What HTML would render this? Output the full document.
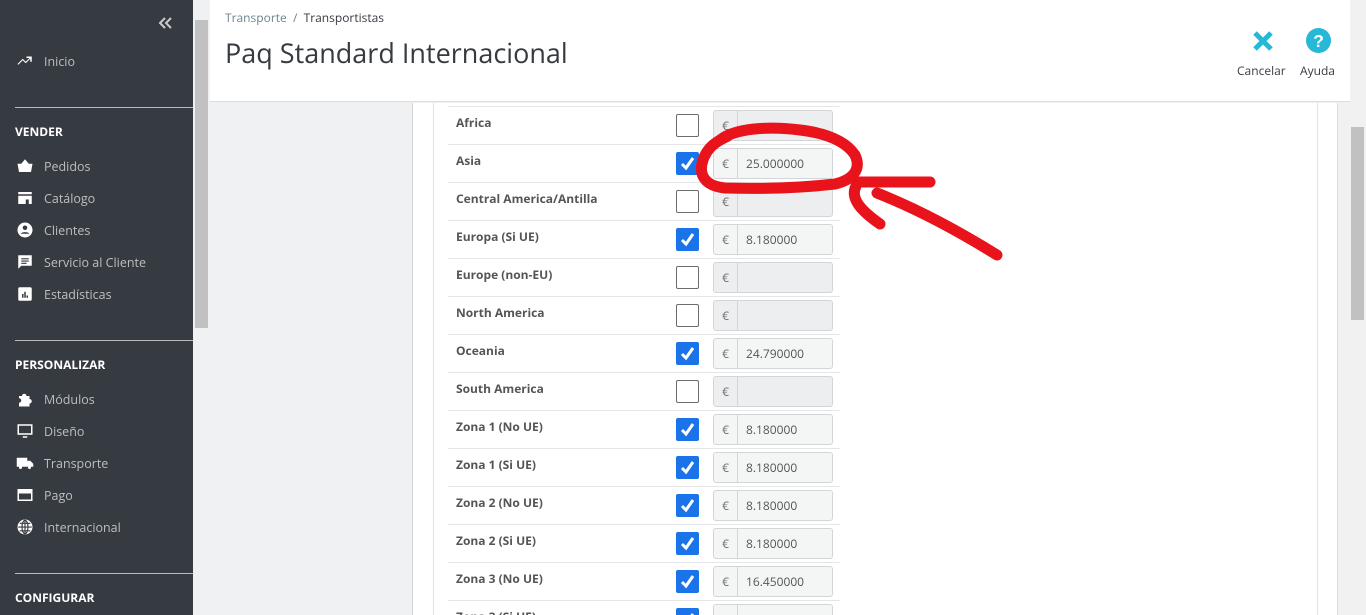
<!DOCTYPE html>
<html><head><meta charset="utf-8"><style>
*{margin:0;padding:0;box-sizing:border-box}
html,body{width:1366px;height:615px;overflow:hidden}
body{background:#eff1f2;font-family:"Open Sans","Liberation Sans",sans-serif;position:relative}
.sb{position:absolute;left:0;top:0;width:193px;height:615px;background:#363a41;color:#bebebe;font-size:12.5px}
.sb .it{position:absolute;left:16px;height:20px;display:flex;align-items:center}
.sb .it svg{width:18px;height:18px;margin-right:10px;fill:#fff}
.sb .h{position:absolute;left:15px;color:#fff;font-weight:bold;font-size:12px}
.sb .ln{position:absolute;left:15px;width:178px;height:1px;background:#bbb}
.scr1{position:absolute;left:193px;top:0;width:17px;height:615px;background:#eff1f2}
.hdr{position:absolute;left:210px;top:0;width:1140px;height:102px;background:#fff;border-bottom:1px solid #dcdcdc}
.card{position:absolute;left:412px;top:103px;width:926px;height:520px;background:#fff;border-left:1px solid #d4d4d4;border-right:1px solid #dcdcdc}
.inner{position:absolute;left:433px;top:103px;width:885px;height:520px;border-left:1px solid #e2e2e2;border-right:1px solid #e2e2e2}
.row{position:absolute;left:448px;width:392px;height:38px;border-top:1px solid #e6e6e6}
.row .l{position:absolute;left:8px;top:7px;font-weight:bold;font-size:12px;color:#555}
.cb{position:absolute;left:228px;top:7px;width:23px;height:23px;border:1px solid #6c6c6c;border-radius:2px;background:#fff}
.cb.on{background:#1a73e8;border-color:#1a73e8}
.cb svg{position:absolute;left:2px;top:2px}
.inp{position:absolute;left:265px;top:3px;width:120px;height:31px;border:1px solid #d2d6d8;border-radius:3px;background:#eceeef;font-size:12px;color:#6c6c6c}
.inp .e{position:absolute;left:0;top:0;width:24px;height:29px;border-right:1px solid #d2d6d8;text-align:center;line-height:29px}
.inp .v{position:absolute;left:32px;top:0;line-height:29px;color:#555}
.inp.on{background:#f4f6f6}
</style></head><body>
<div class="sb">
<svg style="position:absolute;left:158px;top:17px" width="14" height="12" viewBox="0 0 14 12"><path d="M7 1L2 6l5 5M13 1L8 6l5 5" stroke="#ccc" stroke-width="2" fill="none"/></svg>
<div class="it" style="top:51px"><svg viewBox="0 0 24 24"><path d="M3 17l6-6 4 4 6-6v4h2V6h-7v2h4l-5 5-4-4-7 7z"/></svg>Inicio</div>
<div class="ln" style="top:107px"></div>
<div class="h" style="top:123px">VENDER</div>
<div class="it" style="top:156px"><svg viewBox="0 0 24 24"><path d="M2 9h20l-2 11H4zM7 9l5-6 5 6"/></svg>Pedidos</div>
<div class="it" style="top:188px"><svg viewBox="0 0 24 24"><path d="M3 4h18v3H3zM3 9h18v11h-4v-6h-4v6H3z"/></svg>Catálogo</div>
<div class="it" style="top:220px"><svg viewBox="0 0 24 24"><circle cx="12" cy="12" r="10"/><circle cx="12" cy="9" r="3" fill="#363a41"/><path d="M6 17c2-3 10-3 12 0" fill="#363a41"/></svg>Clientes</div>
<div class="it" style="top:252px"><svg viewBox="0 0 24 24"><path d="M3 3h18v14H7l-4 4z"/><path d="M7 7h10v1.5H7zM7 10h10v1.5H7zM7 13h7v1.5H7z" fill="#363a41"/></svg>Servicio al Cliente</div>
<div class="it" style="top:284px"><svg viewBox="0 0 24 24"><rect x="3" y="3" width="18" height="18" rx="2"/><path d="M8 12h2v5H8zM11 9h2v8h-2zM14 14h2v3h-2z" fill="#363a41"/></svg>Estadísticas</div>
<div class="ln" style="top:340px"></div>
<div class="h" style="top:356px">PERSONALIZAR</div>
<div class="it" style="top:389px"><svg viewBox="0 0 24 24"><path d="M4 8h4a3 3 0 016 0h4v4a3 3 0 010 6v4H4v-5a3 3 0 000-6z"/></svg>Módulos</div>
<div class="it" style="top:421px"><svg viewBox="0 0 24 24"><path d="M2 3h20v14H2zM9 19h6v2H9z"/><rect x="4" y="5" width="16" height="10" fill="#363a41"/></svg>Diseño</div>
<div class="it" style="top:453px"><svg viewBox="0 0 24 24"><path d="M1 5h14v12H1zM15 9h4l4 4v4h-8z"/><circle cx="6" cy="18" r="2"/><circle cx="18" cy="18" r="2"/></svg>Transporte</div>
<div class="it" style="top:485px"><svg viewBox="0 0 24 24"><path d="M2 4h20v16H2z"/><rect x="4" y="10" width="16" height="8" fill="#363a41"/></svg>Pago</div>
<div class="it" style="top:517px"><svg viewBox="0 0 24 24"><circle cx="12" cy="12" r="10"/><path d="M12 3v18M3 12h18M5 7h14M5 17h14" stroke="#363a41" stroke-width="1.5" fill="none"/><ellipse cx="12" cy="12" rx="4" ry="9" stroke="#363a41" stroke-width="1.5" fill="none"/></svg>Internacional</div>
<div class="ln" style="top:573px"></div>
<div class="h" style="top:589px">CONFIGURAR</div>
</div>
<div class="scr1"><div style="position:absolute;left:2px;top:20px;width:13px;height:308px;background:#c1c1c1"></div></div>
<div class="hdr">
<div style="position:absolute;left:15px;top:9px;font-size:12px;color:#6c868e">Transporte &nbsp;/&nbsp; <span style="color:#363a41">Transportistas</span></div>
<div style="position:absolute;left:15px;top:34px;font-size:27px;color:#363a41">Paq Standard Internacional</div>
<svg style="position:absolute;left:1042px;top:30px" width="22" height="22" viewBox="0 0 22 22"><path d="M3 3L19 19M19 3L3 19" stroke="#25b9d7" stroke-width="5"/></svg>
<div style="position:absolute;left:1027px;top:62px;font-size:12px;color:#363a41">Cancelar</div>
<svg style="position:absolute;left:1096px;top:28px" width="25" height="25" viewBox="0 0 24 24"><circle cx="12" cy="12" r="12" fill="#25b9d7"/><text x="12" y="18" text-anchor="middle" font-size="17" font-weight="bold" fill="#fff" font-family="Liberation Sans">?</text></svg>
<div style="position:absolute;left:1090px;top:62px;font-size:12px;color:#363a41">Ayuda</div>
</div>
<div style="position:absolute;left:1350px;top:0;width:16px;height:615px;background:#f1f1f1"><div style="position:absolute;left:1px;top:127px;width:13px;height:193px;background:#c1c1c1"></div></div>
<div class="card"></div>
<div class="inner"></div>

<div class="row" style="top:106px"><div class="l">Africa</div><div class="cb"></div><div class="inp"><div class="e">€</div></div></div>
<div class="row" style="top:144px"><div class="l">Asia</div><div class="cb on"><svg width="17" height="17" viewBox="0 0 17 17"><path d="M3 9l4 4 7-10" stroke="#fff" stroke-width="3" fill="none"/></svg></div><div class="inp on"><div class="e">€</div><div class="v">25.000000</div></div></div>
<div class="row" style="top:182px"><div class="l">Central America/Antilla</div><div class="cb"></div><div class="inp"><div class="e">€</div></div></div>
<div class="row" style="top:220px"><div class="l">Europa (Si UE)</div><div class="cb on"><svg width="17" height="17" viewBox="0 0 17 17"><path d="M3 9l4 4 7-10" stroke="#fff" stroke-width="3" fill="none"/></svg></div><div class="inp on"><div class="e">€</div><div class="v">8.180000</div></div></div>
<div class="row" style="top:258px"><div class="l">Europe (non-EU)</div><div class="cb"></div><div class="inp"><div class="e">€</div></div></div>
<div class="row" style="top:296px"><div class="l">North America</div><div class="cb"></div><div class="inp"><div class="e">€</div></div></div>
<div class="row" style="top:334px"><div class="l">Oceania</div><div class="cb on"><svg width="17" height="17" viewBox="0 0 17 17"><path d="M3 9l4 4 7-10" stroke="#fff" stroke-width="3" fill="none"/></svg></div><div class="inp on"><div class="e">€</div><div class="v">24.790000</div></div></div>
<div class="row" style="top:372px"><div class="l">South America</div><div class="cb"></div><div class="inp"><div class="e">€</div></div></div>
<div class="row" style="top:410px"><div class="l">Zona 1 (No UE)</div><div class="cb on"><svg width="17" height="17" viewBox="0 0 17 17"><path d="M3 9l4 4 7-10" stroke="#fff" stroke-width="3" fill="none"/></svg></div><div class="inp on"><div class="e">€</div><div class="v">8.180000</div></div></div>
<div class="row" style="top:448px"><div class="l">Zona 1 (Si UE)</div><div class="cb on"><svg width="17" height="17" viewBox="0 0 17 17"><path d="M3 9l4 4 7-10" stroke="#fff" stroke-width="3" fill="none"/></svg></div><div class="inp on"><div class="e">€</div><div class="v">8.180000</div></div></div>
<div class="row" style="top:486px"><div class="l">Zona 2 (No UE)</div><div class="cb on"><svg width="17" height="17" viewBox="0 0 17 17"><path d="M3 9l4 4 7-10" stroke="#fff" stroke-width="3" fill="none"/></svg></div><div class="inp on"><div class="e">€</div><div class="v">8.180000</div></div></div>
<div class="row" style="top:524px"><div class="l">Zona 2 (Si UE)</div><div class="cb on"><svg width="17" height="17" viewBox="0 0 17 17"><path d="M3 9l4 4 7-10" stroke="#fff" stroke-width="3" fill="none"/></svg></div><div class="inp on"><div class="e">€</div><div class="v">8.180000</div></div></div>
<div class="row" style="top:562px"><div class="l">Zona 3 (No UE)</div><div class="cb on"><svg width="17" height="17" viewBox="0 0 17 17"><path d="M3 9l4 4 7-10" stroke="#fff" stroke-width="3" fill="none"/></svg></div><div class="inp on"><div class="e">€</div><div class="v">16.450000</div></div></div>
<div class="row" style="top:600px"><div class="l">Zona 3 (Si UE)</div><div class="cb on"><svg width="17" height="17" viewBox="0 0 17 17"><path d="M3 9l4 4 7-10" stroke="#fff" stroke-width="3" fill="none"/></svg></div><div class="inp on"><div class="e">€</div></div></div>

<svg style="position:absolute;left:0;top:0" width="1366" height="615" viewBox="0 0 1366 615">
<g fill="none" stroke="#e8131b" stroke-width="11" stroke-linecap="round" stroke-linejoin="round">
<path d="M720 140C735 128 770 126 800 130C825 133 845 140 855 155C862 170 852 180 835 184C800 188 760 189 725 188C705 186 698 175 703 160C707 148 715 142 728 136"/>
<path d="M858 182L930 182"/>
<path d="M856 186C850 198 860 210 880 224"/>
<path d="M877 193C920 210 960 232 997 255"/>
</g>
</svg>
</body></html>
